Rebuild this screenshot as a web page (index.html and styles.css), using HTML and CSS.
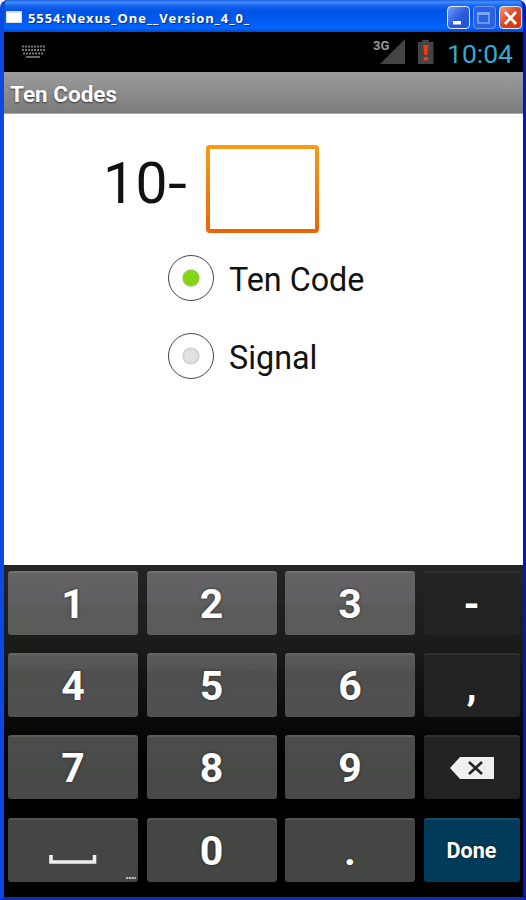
FILE: index.html
```html
<!DOCTYPE html>
<html lang="en">
<head>
    <meta charset="UTF-8">
    <meta name="viewport" content="width=device-width, initial-scale=1.0">
    <title>Ten Codes</title>
    <link rel="stylesheet" href="styles.css">
</head>
<body>
    <div class="window">
        <div class="titlebar">
            <span class="window-icon"></span>
            <span class="window-title">5554:Nexus_One__Version_4_0_</span>
            <div class="window-buttons">
                <button class="win-btn minimize" title="Minimize">
                    <svg width="21" height="21" viewBox="0 0 21 21"><path d="M5 14h8v3.500H5z" fill="#fff"/></svg>
                </button>
                <button class="win-btn maximize" title="Maximize">
                    <svg width="19" height="21" viewBox="0 0 19 21"><path d="M4 6h11v10H4z" fill="none" stroke="#7fa4f5" stroke-width="1.6"/><path d="M3.200 6.500h12.600" stroke="#7fa4f5" stroke-width="3"/></svg>
                </button>
                <button class="win-btn close" title="Close">
                    <svg width="21" height="21" viewBox="0 0 21 21"><path d="M5 5l11 12M16 5L5 17" stroke="#fff" stroke-width="2.8"/></svg>
                </button>
            </div>
        </div>

        <div class="screen">
            <div class="status-bar">
                <svg class="ime-icon" width="25" height="14" viewBox="0 0 25 14">
                    <path d="M1 1.500h23M1 5h23M2 8.500h21" stroke="#777" stroke-width="2" stroke-dasharray="2 1"/>
                    <path d="M5 12h14" stroke="#888" stroke-width="1.500"/>
                </svg>
                <div class="signal">
                    <svg width="32" height="28" viewBox="0 0 32 28"><path d="M6 26L31 1v25z" fill="#444"/></svg>
                    <span class="network">3G</span>
                </div>
                <svg class="battery" width="18" height="26" viewBox="0 0 18 26">
                    <path d="M1 3h4V1h7v2h4.500v22H1z" fill="#444"/>
                    <path d="M6.300 6h5l-1 10h-3zM6.500 18h4.500v3.500H6.500z" fill="#f33a12"/>
                </svg>
                <span class="clock">10:04</span>
            </div>

            <div class="app-header">
                <h1>Ten Codes</h1>
            </div>

            <div class="content">
                <div class="code-row">
                    <label class="prefix" for="code">10<span class="dash">-</span></label>
                    <input class="code-input" id="code" type="text">
                </div>
                <div class="options">
                    <label class="option"><span class="radio checked"></span>Ten Code</label>
                    <label class="option"><span class="radio"></span>Signal</label>
                </div>
            </div>

            <div class="keyboard">
                <button class="key">1</button>
                <button class="key">2</button>
                <button class="key">3</button>
                <button class="key dark">-</button>

                <button class="key row-2">4</button>
                <button class="key row-2">5</button>
                <button class="key row-2">6</button>
                <button class="key dark">,</button>

                <button class="key row-3">7</button>
                <button class="key row-3">8</button>
                <button class="key row-3">9</button>
                <button class="key dark" title="Delete">
                    <svg width="46" height="26" viewBox="0 0 46 26">
                        <path d="M1 13L11 2h34v22H11z" fill="#eee"/>
                        <path d="M20 7l13 12M33 7L20 19" stroke="#222" stroke-width="2.600"/>
                    </svg>
                </button>

                <button class="key row-4 space" title="Space">
                    <svg width="48" height="10" viewBox="0 0 48 10"><path d="M2 0v7h43.500V0" fill="none" stroke="#eee" stroke-width="3.600"/></svg>
                    <span class="more"></span>
                </button>
                <button class="key row-4">0</button>
                <button class="key row-4">.</button>
                <button class="key done">Done</button>
            </div>
        </div>
    </div>
</body>
</html>
```
FILE: styles.css
```css
* {
    margin: 0;
    padding: 0;
    box-sizing: border-box;
}

body {
    font-family: Roboto, sans-serif;
    background: #e8edf8;
    height: 900px;
    overflow: hidden;
}

.window {
    height: 900px;
    border: solid #0b49e0;
    border-width: 0 3px 3px 4px;
    border-right-color: #0319b0;
    border-bottom-color: #0d2fae;
    border-radius: 8px 8px 0 0;
    background: #000;
    overflow: hidden;
}

button {
    border: none;
    font-family: inherit;
}

svg {
    display: block;
}

/* Title bar */
.titlebar {
    height: 32px;
    margin: 0 -3px 0 -4px;
    padding: 2px 4px 0 6px;
    display: flex;
    align-items: center;
    background: linear-gradient(#1a5ee0 0, #3f8dfd 2px, #1563ee 6px, #0054e3 11px, #025af0 20px, #0464fe 28px, #0148d0 32px);
}

.window-icon {
    width: 16px;
    height: 12px;
    background: #fff;
    border: 1px solid #ddd;
    border-top: 2px solid #d0dcf4;
}

.window-title {
    margin: 2px 0 0 6px;
    font-family: "Open Sans", sans-serif;
    font-size: 13px;
    font-weight: 700;
    letter-spacing: 0.9px;
    line-height: 18px;
    color: #fff;
    text-shadow: 1px 1px 1px #0a2a80;
    white-space: nowrap;
}

.window-buttons {
    margin-left: auto;
    display: flex;
    gap: 3px;
}

.win-btn {
    width: 23px;
    height: 23px;
    border: 1px solid #e4ecff;
    border-radius: 4px;
    background: linear-gradient(135deg, #7ba0f5, #2a5de0 50%, #2152d0);
}

.maximize {
    border-color: #7597ea;
    background: #2b62e2;
}

.close {
    background: linear-gradient(135deg, #f09a80, #dc4420 50%, #c83510);
}

/* Android status bar */
.status-bar {
    height: 40px;
    padding-right: 10px;
    display: flex;
    align-items: center;
    background: #000;
}

.ime-icon {
    margin-left: 17px;
}

.signal {
    position: relative;
    margin-left: auto;
}

.network {
    position: absolute;
    left: -1px;
    top: 0;
    font-size: 13px;
    line-height: 16px;
    font-weight: 700;
    color: #999;
}

.battery {
    margin-left: 11px;
}

.clock {
    margin: 2px 0 0 12px;
    font-size: 26.5px;
    color: #33a9d2;
}

.app-header {
    height: 42px;
    padding: 2px 6px 0;
    display: flex;
    align-items: center;
    background: linear-gradient(#9c9c9c, #7b7b7b);
    border-bottom: 1px solid #aaa;
}

.app-header h1 {
    font-size: 22.5px;
    font-weight: 700;
    color: #fff;
    text-shadow: 0 1px 2px #333;
}

/* Code form */
.content {
    height: 451px;
    padding-top: 29px;
    background: #fff;
}

.code-row {
    display: flex;
    padding-left: 99px;
}

.prefix {
    width: 101px;
    font-size: 57px;
    line-height: 82px;
    letter-spacing: 0.5px;
    color: #111;
    white-space: nowrap;
}

.dash {
    display: inline-block;
    transform: scaleX(1.2);
    transform-origin: left;
}

.code-input {
    width: 113px;
    height: 88px;
    margin: 2px 0 0 2px;
    border: 4px solid transparent;
    border-radius: 4px;
    background: linear-gradient(#fff, #fff) padding-box, linear-gradient(#f99b13, #e96508) border-box;
    outline: none;
}

.options {
    padding: 23px 0 0 164px;
}

.option {
    height: 48px;
    margin-bottom: 30px;
    display: flex;
    align-items: center;
    font-size: 32.3px;
    color: #111;
}

.radio {
    width: 46px;
    height: 46px;
    margin: 0 15px 4px 0;
    border: 1.5px solid #444;
    border-radius: 50%;
    background: radial-gradient(circle, #e2e2e2 6px, #ccc 8px, #fff 9px);
}

.radio.checked {
    background: radial-gradient(circle, #83d516 7px, #94c64e 8px, #fff 9px);
}

/* Numeric keyboard */
.keyboard {
    height: 332px;
    padding: 6px 4px 0;
    display: grid;
    grid-template-columns: repeat(3, 130px) 96px;
    grid-auto-rows: 64px;
    gap: 18.2px 8.5px;
    background: linear-gradient(#242424, #1a1c19 80px, #080a08 160px, #000 200px);
}

.key {
    position: relative;
    display: flex;
    align-items: center;
    justify-content: center;
    border-radius: 3px;
    border-top: 2px solid #707070;
    background: linear-gradient(#656265, #605f61 48%, #595c58 54%, #5b5c5a);
    color: #fff;
    font-size: 41px;
    font-weight: 700;
    text-shadow: 0 0 3px #222;
}

.key.row-2 {
    border-color: #656565;
    background: linear-gradient(#5a5a5b, #555 23%, #4f514f 26%, #505050);
}

.key.row-3 {
    border-color: #5b5c5b;
    background: linear-gradient(#4b4d4a, #484a48 65%, #484848);
}

.key.row-4 {
    border-color: #535653;
    background: #444643;
}

.key.dark {
    border-color: #303030;
    background: #222;
}

.key.done {
    border-color: #174b66;
    background: #003b59;
    font-size: 21.5px;
}

.space svg {
    margin-top: 18px;
}

.more {
    position: absolute;
    right: 2px;
    bottom: 3px;
    width: 10px;
    height: 2px;
    background: repeating-linear-gradient(90deg, #bbb 0 2px, #777 2px 3px);
}
```
